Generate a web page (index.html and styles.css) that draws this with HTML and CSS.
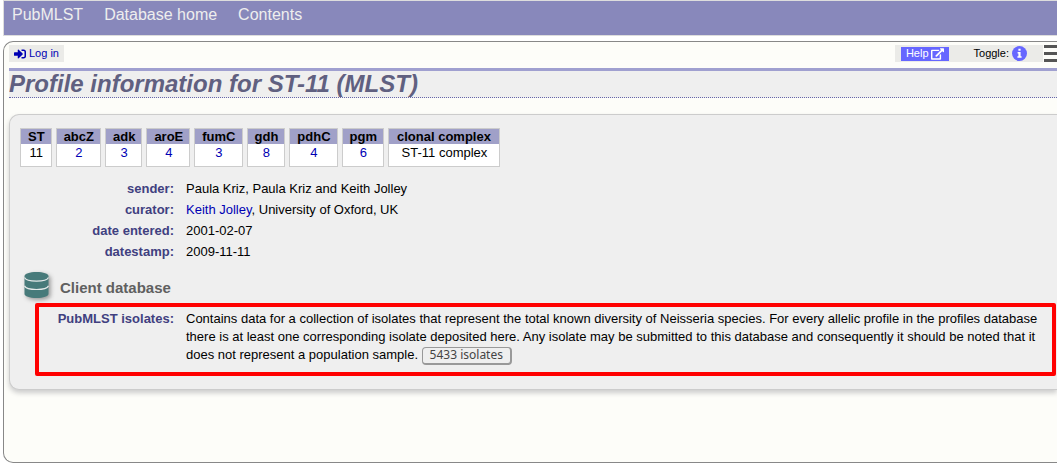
FILE: index.html
```html
<!DOCTYPE html>
<html lang="en">
<head>
<meta charset="utf-8">
<title>Profile information for ST-11 (MLST)</title>
<link rel="stylesheet" href="styles.css">
</head>
<body>
<nav class="menu">
  <a href="#">PubMLST</a>
  <a href="#">Database home</a>
  <a href="#">Contents</a>
</nav>
<main class="page">
  <div class="toolbar">
    <a class="login" href="#">
      <svg class="login-icon" viewBox="0 0 512 512" aria-hidden="true"><path fill="currentColor" d="M416 448h-84c-7 0-12-5-12-12v-40c0-7 5-12 12-12h84c18 0 32-14 32-32V160c0-18-14-32-32-32h-84c-7 0-12-5-12-12V76c0-7 5-12 12-12h84c53 0 96 43 96 96v192c0 53-43 96-96 96zm-47-209L201 71c-15-15-41-5-41 17v96H24c-13 0-24 11-24 24v96c0 13 11 24 24 24h136v96c0 22 26 32 41 17l168-168c9-10 9-25 0-34z"/></svg>Log in</a>
    <div class="tools">
      <div class="tools-box">
        <a class="help" href="#">Help
          <svg class="help-icon" viewBox="0 0 576 512" aria-hidden="true"><path fill="currentColor" d="M576 24v128c0 21-26 32-41 17l-36-36-243 243c-9 9-25 9-34 0l-22-22c-9-9-9-25 0-34L443 77l-36-36c-15-15-4-41 17-41h128c13 0 24 11 24 24zM407 271l-16 16c-5 4-7 11-7 17v144H64V128h264c6 0 12-3 17-7l16-16c15-15 4-41-17-41H48C21 64 0 85 0 112v352c0 27 21 48 48 48h352c27 0 48-21 48-48V288c0-21-26-32-41-17z"/></svg></a>
        <button class="toggle" type="button">Toggle:
          <svg class="info-icon" viewBox="0 0 15 15" aria-hidden="true"><circle cx="7.5" cy="7.5" r="7.5" fill="#66f"/><path fill="#fff" d="M6.4 2.800h2.200v2H6.400zM5.600 6h3v4.200h1v1.500H5.400v-1.500h1V7.400h-.8z"/></svg></button>
      </div>
      <button class="hamburger" type="button" aria-label="Menu"><span></span><span></span><span></span></button>
    </div>
  </div>
  <h1 class="title">Profile information for ST-11 (MLST)</h1>
  <section class="box">
    <table class="profile">
      <thead><tr><th>ST</th><th>abcZ</th><th>adk</th><th>aroE</th><th>fumC</th><th>gdh</th><th>pdhC</th><th>pgm</th><th class="complex">clonal complex</th></tr></thead>
      <tbody><tr><td>11</td><td><a href="#">2</a></td><td><a href="#">3</a></td><td><a href="#">4</a></td><td><a href="#">3</a></td><td><a href="#">8</a></td><td><a href="#">4</a></td><td><a href="#">6</a></td><td>ST-11 complex</td></tr></tbody>
    </table>
    <dl class="data">
      <dt>sender:</dt><dd>Paula Kriz, Paula Kriz and Keith Jolley</dd>
      <dt>curator:</dt><dd><a href="#">Keith Jolley</a>, University of Oxford, UK</dd>
      <dt>date entered:</dt><dd>2001-02-07</dd>
      <dt>datestamp:</dt><dd>2009-11-11</dd>
    </dl>
    <div class="heading">
      <svg class="db-icon" viewBox="0 0 24 26" aria-hidden="true"><path fill="#477a7a" d="M0 4c0-2.200 5-4 12-4s12 1.800 12 4v18c0 2.200-5 4-12 4S0 24.200 0 22z"/><path fill="none" stroke="#e4e9e9" stroke-width="1.200" d="M0 5.500c1 2.500 6 3.700 12 3.700s11-1.200 12-3.700M0 13.800c1 2.500 6 3.700 12 3.700s11-1.200 12-3.700"/></svg>
      <h2>Client database</h2>
    </div>
    <div class="client">
      <dl class="data data-long">
        <dt>PubMLST isolates:</dt>
        <dd>Contains data for a collection of isolates that represent the total known diversity of Neisseria species. For every allelic profile in the profiles database there is at least one corresponding isolate deposited here. Any isolate may be submitted to this database and consequently it should be noted that it does not represent a population sample. <button class="isolates" type="button">5433 isolates</button></dd>
      </dl>
      <div class="highlight"></div>
    </div>
  </section>
</main>
</body>
</html>
```
FILE: styles.css
```css
* { box-sizing: border-box; }
html, body { height: 100%; }
body {
  margin: 0;
  display: flex;
  flex-direction: column;
  background: #fff;
  color: #000;
  font: 13px/18px "Liberation Sans", Arial, sans-serif;
}
a { color: #0000b4; text-decoration: none; }
button { font: inherit; color: inherit; }

.menu {
  flex: none;
  display: flex;
  gap: 21px;
  height: 36px;
  margin-left: 3px;
  padding: 4px 8px;
  border: 1px solid #ddd;
  border-right: 0;
  background: #88b;
  font-size: 16px;
  line-height: 19px;
}
.menu a { color: #eee; }

.page {
  flex: 1 0 auto;
  margin: 5px 0 2px 3px;
  padding: 3px 0 16px 5px;
  border: 1px solid #888;
  border-right: 0;
  border-radius: 10px 0 0 10px;
  background: #fdfdf9;
}
.toolbar {
  display: flex;
  justify-content: space-between;
  height: 23px;
  font-size: 11px;
  line-height: 17px;
}
.login {
  display: flex;
  align-items: center;
  gap: 3px;
  height: 17px;
  padding: 0 5px;
  background: #ebebe8;
}
.login-icon { width: 12px; height: 12px; }
.tools { display: flex; gap: 1px; }
.tools-box {
  display: flex;
  align-items: center;
  gap: 25px;
  height: 17px;
  padding: 0 16px 0 6px;
  background: #ebebe8;
}
.help {
  display: flex;
  align-items: center;
  gap: 2px;
  height: 14px;
  padding: 0 5px;
  background: #66f;
  color: #fff;
}
.help-icon { width: 13px; height: 12px; }
.toggle {
  display: flex;
  align-items: center;
  gap: 3px;
  padding: 0;
  border: 0;
  background: none;
}
.info-icon { width: 15px; height: 15px; }
.hamburger {
  display: flex;
  flex-direction: column;
  justify-content: space-between;
  width: 13px;
  height: 17px;
  padding: 0;
  border: 0;
  background: none;
}
.hamburger span { height: 3px; background: #555; }

.title {
  margin: 0;
  border-top: 3px solid #a0a0d0;
  border-bottom: 1px dotted #66a;
  background: #efefef;
  color: #606080;
  font-size: 24px;
  font-style: italic;
  line-height: 26px;
}

.box {
  margin-top: 16px;
  padding: 13px 0 24px 6px;
  border: 1px solid #ccc;
  border-right: 0;
  border-radius: 10px 0 0 10px;
  background: #efefef;
  box-shadow: 0 3px 5px #ccc;
}
.profile {
  border-spacing: 4px 0;
  line-height: 15px;
  text-align: center;
}
.profile th {
  padding: 1px 6px 0 7px;
  border: 1px solid #ccc;
  border-bottom: 0;
  background: #a0a0c8;
  line-height: 14px;
}
.profile .complex { padding: 1px 8px 0; }
.profile td {
  padding: 1px 6px 6px 7px;
  border: 1px solid #ccc;
  border-top: 0;
  background: #fff;
}

.data {
  display: grid;
  grid-template-columns: 158px 1fr;
  gap: 3px 12px;
  margin: 13px 0 0;
}
.data dt { color: #404080; font-weight: bold; text-align: right; }
.data dd { margin: 0; }

.heading {
  display: flex;
  align-items: center;
  gap: 11px;
  margin: 11px 0 0 8px;
}
.heading h2 {
  margin: 0;
  padding-top: 5px;
  color: #606060;
  font-size: 15px;
}
.db-icon {
  width: 25px;
  height: 26px;
  filter: drop-shadow(2px 2px 2px #999);
}

.client { position: relative; padding: 12px 10px 0 0; }
.data-long { margin: 0; }
.isolates {
  height: 18px;
  padding: 0 7px;
  border: 1px solid #999;
  border-right-width: 2px;
  border-bottom-width: 2px;
  border-radius: 4px;
  background: #efefef;
  color: #444;
  font: 12px/14px "Noto Sans", sans-serif;
  vertical-align: middle;
}
.highlight {
  position: absolute;
  inset: 5px 1px -11px 19px;
  border: 4px solid #f00;
  border-radius: 2px;
  pointer-events: none;
}
```
